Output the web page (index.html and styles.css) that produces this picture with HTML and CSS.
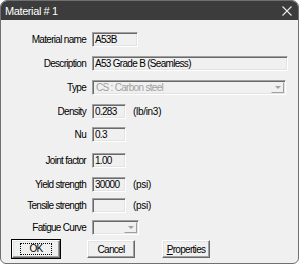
FILE: index.html
```
<!DOCTYPE html>
<html>
<head>
  <title>Material # 1</title>
  <link rel="stylesheet" href="styles.css">
</head>
<body>

<div class="window">
  <div class="titlebar">
    <span class="title">Material # 1</span>
    <svg class="close" width="10" height="10" viewBox="0 0 10 10"><path d="M0.5 0.5 L9.5 9.5 M9.5 0.5 L0.5 9.5" stroke="#e8e8e8" stroke-width="1.1" fill="none"/></svg>
  </div>

  <div class="form">
    <div class="row r-name"><span class="lbl">Material name</span><div class="field w-name">A53B</div></div>
    <div class="row r-desc"><span class="lbl">Description</span><div class="field w-desc">A53 Grade B (Seamless)</div></div>
    <div class="row r-type"><span class="lbl">Type</span><div class="combo w-type"><span class="combo-text">CS : Carbon steel</span><span class="drop"><i class="arrow"></i></span></div></div>
    <div class="row r-dens"><span class="lbl">Density</span><div class="field w-num">0.283</div><span class="unit">(lb/in3)</span></div>
    <div class="row r-nu"><span class="lbl">Nu</span><div class="field w-num">0.3</div></div>
    <div class="row r-joint"><span class="lbl">Joint factor</span><div class="field w-num">1.00</div></div>
    <div class="row r-yield"><span class="lbl">Yield strength</span><div class="field w-num">30000</div><span class="unit">(psi)</span></div>
    <div class="row r-tens"><span class="lbl">Tensile strength</span><div class="field w-num"></div><span class="unit">(psi)</span></div>
    <div class="row r-fat"><span class="lbl">Fatigue Curve</span><div class="combo w-fat"><span class="combo-text"></span><span class="drop"><i class="arrow"></i></span></div></div>
  </div>

  <div class="buttons">
    <div class="btn default"><span class="focus">OK</span></div>
    <div class="btn">Cancel</div>
    <div class="btn"><u>P</u>roperties</div>
  </div>
</div>

</body>
</html>
```

FILE: styles.css
```
body { margin: 0; background: #fff; font-family: "Liberation Sans", Arial, sans-serif; font-size: 10px; letter-spacing: -0.7px; color: #000; }

.window { width: 297px; height: 262px; border: 1px solid #707070; border-radius: 7px 7px 6px 6px; background: #f0f0f0; overflow: hidden; }

.titlebar { height: 19px; background: #3c3c3c; display: flex; align-items: center; padding-left: 4px; }
.title { color: #fff; font-size: 11px; letter-spacing: -0.4px; flex: 1; }
.close { margin-right: 6px; }

.form { padding-top: 12px; display: flex; flex-direction: column; }
.row { display: flex; align-items: center; height: 15px; }
.lbl { width: 85px; text-align: right; flex: none; }
.unit { margin-left: 7px; letter-spacing: -0.3px; }

.r-desc { margin-top: 9px; }
.r-type { margin-top: 9px; }
.r-dens { margin-top: 9px; }
.r-nu { margin-top: 8px; }
.r-joint { margin-top: 11px; }
.r-yield { margin-top: 9px; }
.r-tens { margin-top: 6px; }
.r-fat { margin-top: 7px; }

.field, .combo { margin-left: 6px; height: 15px; box-sizing: border-box; border: 1px solid; border-color: #a0a0a0 #fff #fff #a0a0a0; box-shadow: inset 1px 1px #696969, inset -1px -1px #e3e3e3; background: #f0f0f0; padding-left: 2px; line-height: 13px; white-space: nowrap; overflow: hidden; }
.w-name { width: 46px; }
.w-desc { width: 196px; }
.w-type { width: 194px; }
.w-num { width: 34px; }
.w-fat { width: 47px; }

.combo { display: flex; padding-left: 0; }
.combo-text { flex: 1; color: #a0a0a0; padding-left: 3px; }
.drop { width: 13px; margin: 1px 1px 1px 0; box-sizing: border-box; border: 1px solid; border-color: #f0f0f0 #a0a0a0 #a0a0a0 #f0f0f0; display: flex; align-items: center; justify-content: center; }
.arrow { width: 0; height: 0; border-left: 3px solid transparent; border-right: 3px solid transparent; border-top: 3px solid #a0a0a0; }

.buttons { display: flex; padding: 5px 0 0 11px; gap: 27px; }
.btn { width: 48px; height: 18px; box-sizing: border-box; border: 1px solid; border-color: #fff #696969 #696969 #fff; box-shadow: inset -1px -1px #a0a0a0, inset 1px 1px #e3e3e3; display: flex; align-items: center; justify-content: center; background: #f0f0f0; }
.btn.default { outline: 1px solid #000; }
.focus { border: 1px dotted #000; padding: 0 8px; line-height: 10px; }
```
